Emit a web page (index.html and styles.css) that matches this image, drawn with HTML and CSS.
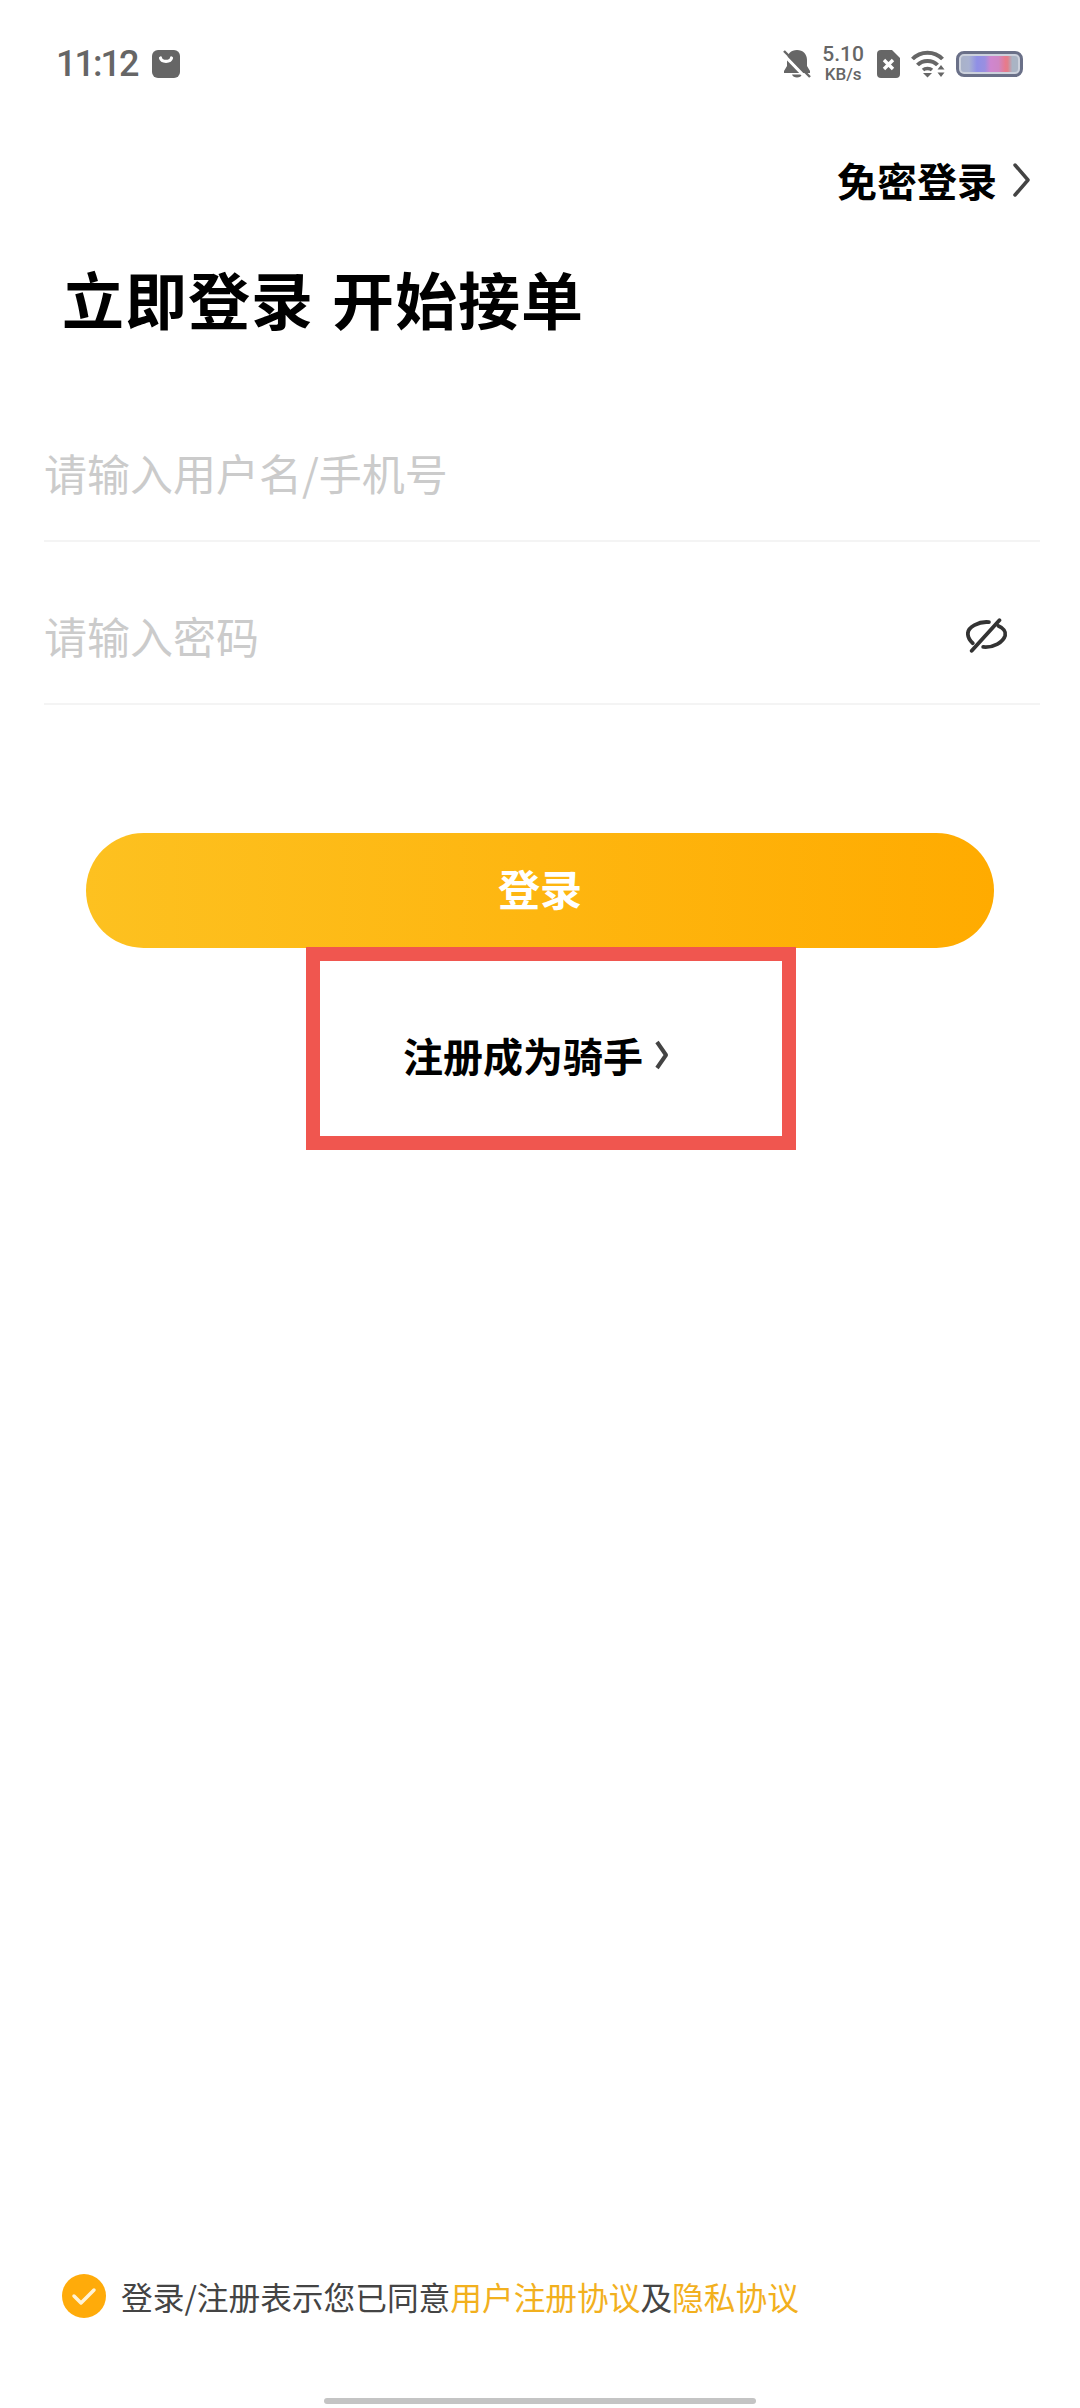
FILE: index.html
```html
<!DOCTYPE html>
<html lang="zh-CN">
<head>
  <meta charset="UTF-8" />
  <meta name="viewport" content="width=device-width, initial-scale=1" />
  <title>立即登录</title>
  <link rel="stylesheet" href="styles.css">
</head>
<body>
  <div class="page">
    <!-- Status bar -->
    <div class="status-bar">
      <div class="status-left">
        <span class="time">11:12</span>
        <svg class="icon-bag" width="28" height="28" viewBox="0 0 28 28">
          <rect width="28" height="28" rx="6" fill="#666"/>
          <path d="M8.500 8c1 4.500 10 4.500 11 0" fill="none" stroke="#fff" stroke-width="3.200" stroke-linecap="round"/>
        </svg>
      </div>
      <div class="status-right">
        <svg width="28" height="30" viewBox="0 0 28 30">
          <path d="M14 1c-6 0-10 4-10 10v6l-3 5v2h26v-2l-3-5v-6c0-6-4-10-10-10z" fill="#666"/>
          <path d="M9 25.500h10c-1 4-9 4-10 0z" fill="#666"/>
          <path d="M0 5l24 25" stroke="#fff" stroke-width="3"/>
          <path d="M1 2l26 26" stroke="#666" stroke-width="2.400"/>
        </svg>
        <div class="speed"><span>5.10</span><span class="speed-unit">KB/s</span></div>
        <svg width="23" height="28" viewBox="0 0 23 28">
          <path d="M4 0h11l8 8v16a4 4 0 0 1-4 4H4a4 4 0 0 1-4-4V4a4 4 0 0 1 4-4z" fill="#666"/>
          <path d="M7 10l9 9M16 10l-9 9" stroke="#fff" stroke-width="3.400"/>
        </svg>
        <svg width="34" height="28" viewBox="0 0 34 28">
          <path d="M1.500 9c8-8.500 22-8.500 30 0" fill="none" stroke="#666" stroke-width="4"/>
          <path d="M6.500 15c5-5.500 15-5.500 20 0" fill="none" stroke="#666" stroke-width="4"/>
          <path d="M12 20c2-2 7-2 9 0" fill="none" stroke="#666" stroke-width="3.400"/>
          <path d="M12 23h9l-4.500 4.500z" fill="#666"/>
          <path d="M30 15l3.500 4.500h-7zM30 27l-3.500-4.500h7z" fill="#666"/>
        </svg>
        <div class="battery"><div class="battery-fill"></div></div>
      </div>
    </div>

    <div class="quick-login">
      <span>免密登录</span>
      <svg width="18" height="34" viewBox="0 0 18 34">
        <path d="M2 2l13 15L2 32" fill="none" stroke="#444" stroke-width="3.500" stroke-linecap="round" stroke-linejoin="round"/>
      </svg>
    </div>

    <h1 class="title">立即登录 开始接单</h1>

    <div class="field">
      <span class="placeholder">请输入用户名/手机号</span>
    </div>
    <div class="field">
      <span class="placeholder">请输入密码</span>
      <svg class="icon-eye" width="42" height="35" viewBox="0 0 44 36">
        <path d="M24 4C14 3 1 9 2 17c.3 4 3 7 5 9" fill="none" stroke="#333" stroke-width="4" stroke-linecap="round"/>
        <path d="M34 8c5 2 8 6 7 10-2 7-12 13-23 12" fill="none" stroke="#333" stroke-width="4" stroke-linecap="round"/>
        <path d="M35 2L6 34" stroke="#333" stroke-width="4" stroke-linecap="round"/>
      </svg>
    </div>

    <button class="login-btn">登录</button>

    <div class="register-box">
      <span>注册成为骑手</span>
      <svg width="14" height="30" viewBox="0 0 14 30">
        <path d="M2 2l9 13L2 28" fill="none" stroke="#444" stroke-width="4" stroke-linejoin="round"/>
      </svg>
    </div>

    <div class="agreement">
      <svg width="44" height="44" viewBox="0 0 44 44">
        <circle cx="22" cy="22" r="22" fill="#ffab0a"/>
        <path d="M12 22l7 7 13-13" fill="none" stroke="#fff3d6" stroke-width="3.500" stroke-linecap="round" stroke-linejoin="round"/>
      </svg>
      <p>登录/注册表示您已同意<span class="link">用户注册协议</span>及<span class="link">隐私协议</span></p>
    </div>

    <div class="home-bar"></div>
  </div>
</body>
</html>
```

FILE: styles.css
```css
* {
  box-sizing: border-box;
}

body {
  margin: 0;
  background-color: #fff;
  font-family: "Noto Sans CJK SC", "Noto Sans", sans-serif;
  color: #000;
}

.page {
  display: flex;
  flex-direction: column;
  height: 2408px;
  overflow: hidden;
}

.status-bar {
  display: flex;
  justify-content: space-between;
  align-items: center;
  height: 128px;
  padding: 0 57px 0 56px;
  flex-shrink: 0;
}

.status-left {
  display: flex;
  align-items: center;
  gap: 15px;
}

.time {
  font-family: Roboto, sans-serif;
  font-size: 36px;
  font-weight: 500;
  color: #666;
  letter-spacing: -2px;
}

.status-right {
  display: flex;
  align-items: center;
  gap: 11px;
}

.speed {
  display: flex;
  flex-direction: column;
  align-items: center;
  font-family: Roboto, sans-serif;
  font-size: 21px;
  font-weight: 500;
  line-height: 20px;
  color: #666;
  margin-right: 2px;
}

.speed-unit {
  font-size: 17px;
}

.battery {
  width: 67px;
  height: 26px;
  padding: 2px;
  border: 3px solid #6a7088;
  border-radius: 8px;
  background-color: #ccd1dc;
}

.battery-fill {
  height: 100%;
  border-radius: 3px;
  background: linear-gradient(90deg, #a9b2c8 0%, #a9b2d0 14%, #8f8fe6 28%, #9a8fe0 42%, #cf86cf 52%, #cf86c4 66%, #e87a8c 78%, #e0808c 82%, #aab4c4 90%);
}

.quick-login {
  display: flex;
  justify-content: flex-end;
  align-items: center;
  gap: 16px;
  height: 108px;
  padding: 0 49px 5px 0;
  font-size: 40px;
  font-weight: 700;
  flex-shrink: 0;
}

.title {
  margin: 0;
  height: 143px;
  padding: 21px 0 0 62px;
  font-size: 62px;
  line-height: 82px;
  font-weight: 700;
  letter-spacing: 1px;
  word-spacing: 3px;
  flex-shrink: 0;
}

.field {
  display: flex;
  justify-content: space-between;
  align-items: flex-end;
  height: 163px;
  margin: 0 40px 0 44px;
  padding: 0 32px 42px 0;
  border-bottom: 2px solid #f4f4f4;
  flex-shrink: 0;
}

.placeholder {
  font-size: 43px;
  line-height: 52px;
  color: #cbcbcb;
}

.icon-eye {
  margin-bottom: 8px;
}

.login-btn {
  display: block;
  width: 908px;
  height: 115px;
  margin: 128px 0 0 86px;
  padding: 0 0 6px;
  border: 0;
  border-radius: 58px;
  background: linear-gradient(90deg, #fdc120, #ffab00);
  color: #fff;
  font-family: inherit;
  font-size: 42px;
  font-weight: 700;
  flex-shrink: 0;
}

.register-box {
  display: flex;
  align-items: center;
  gap: 12px;
  width: 490px;
  height: 203px;
  margin: -1px 0 0 306px;
  padding: 13px 0 0 83px;
  border: 14px solid #f0564f;
  font-size: 40px;
  font-weight: 700;
  flex-shrink: 0;
}

.agreement {
  display: flex;
  align-items: center;
  gap: 15px;
  margin-top: auto;
  padding-left: 62px;
  flex-shrink: 0;
}

.agreement p {
  margin: 0;
  font-size: 31.7px;
  line-height: 44px;
  color: #444;
}

.link {
  color: #f2b01e;
}

.home-bar {
  width: 432px;
  height: 6px;
  margin: 80px 0 4px 324px;
  border-radius: 3px;
  background-color: #c4c4c4;
  flex-shrink: 0;
}
```
